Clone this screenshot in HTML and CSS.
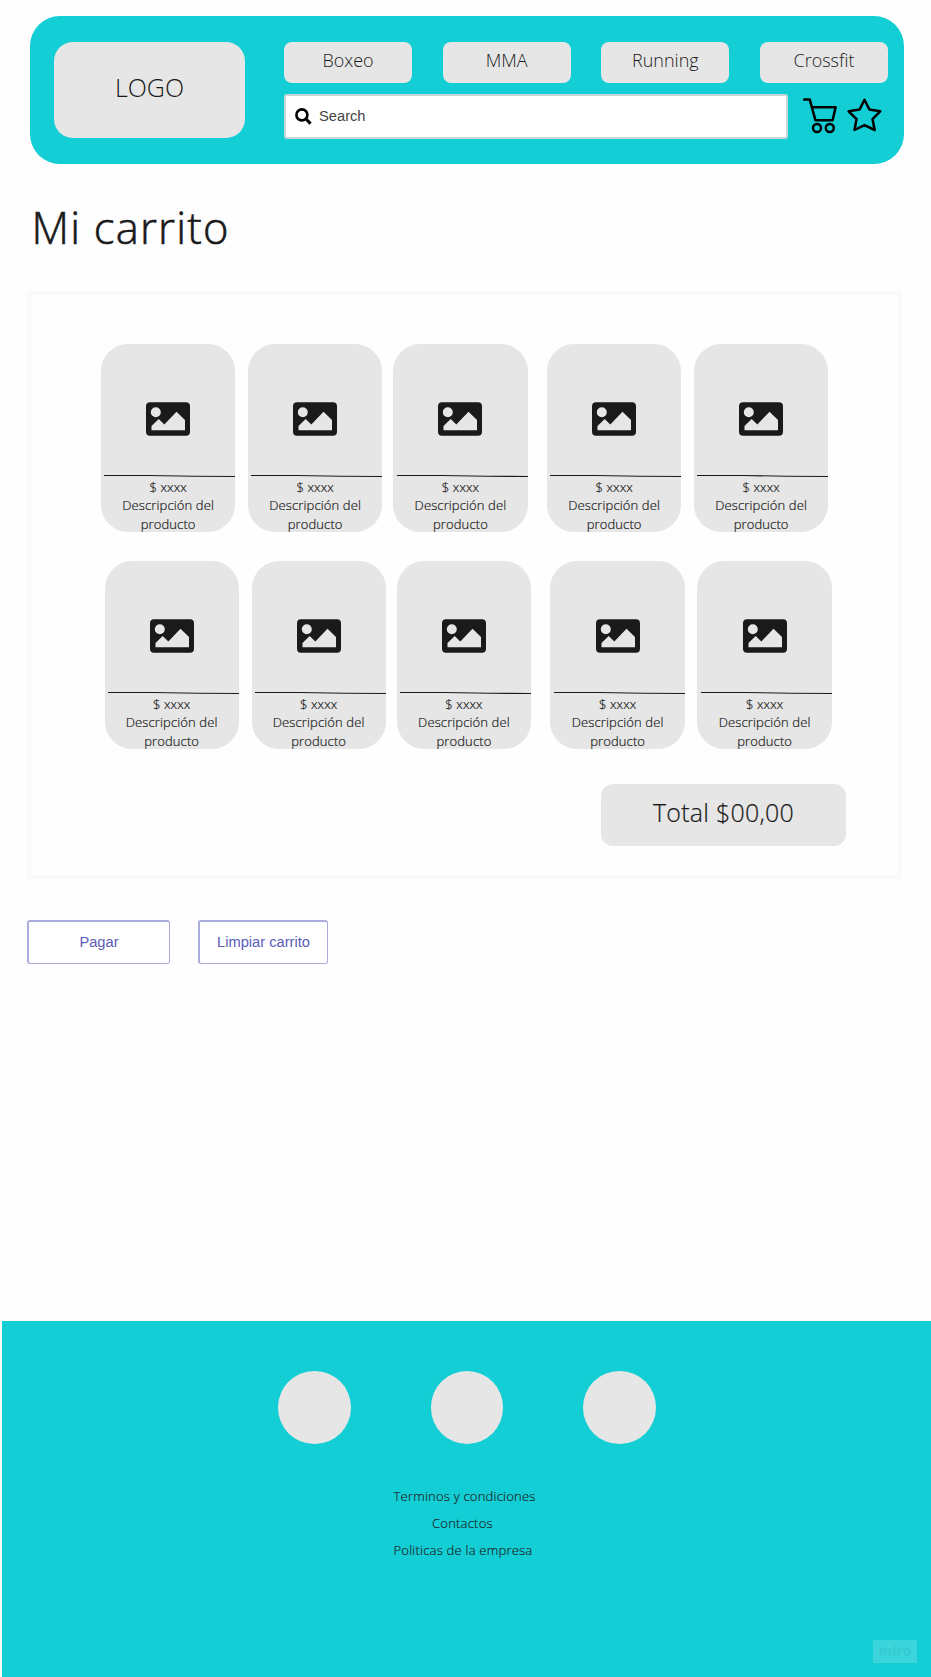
FILE: index.html
```html
<!DOCTYPE html>
<html lang="es">
<head>
<meta charset="utf-8">
<title>Mi carrito</title>
<link rel="stylesheet" href="styles.css">
</head>
<body>
<svg width="0" height="0" class="sprite">
  <symbol id="picture" viewBox="0 0 44 34">
    <path fill="#1a1a1a" fill-rule="evenodd" d="M4 .3H40Q44 .3 44 4.3V29.7Q44 33.7 40 33.7H4Q0 33.7 0 29.7V4.3Q0 .3 4 .3ZM9.8 5.2A5 5 0 1 0 9.8 15.2A5 5 0 1 0 9.8 5.2ZM5.5 28.2H39V18L30.5 9.8L18.3 22.5L12.7 17L5.5 24Z"/>
  </symbol>
  <symbol id="rule" viewBox="0 0 131 4">
    <path d="M0 1.5H45L90 2.2L131 2.5" fill="none" stroke="#1a1a1a" stroke-width="1.1"/>
  </symbol>
</svg>
<header class="header">
  <div class="logo">LOGO</div>
  <div class="header-main">
    <nav class="nav">
      <a class="nav-item">Boxeo</a>
      <a class="nav-item">MMA</a>
      <a class="nav-item">Running</a>
      <a class="nav-item">Crossfit</a>
    </nav>
    <div class="tools">
      <div class="search">
        <svg class="search-icon" width="17" height="17" viewBox="0 0 17 17" fill="none" stroke="#000"><circle cx="6.9" cy="6.9" r="5.5" stroke-width="2.6"/><path d="M11 11L15.6 15.6" stroke-width="3.1"/></svg>
        <span>Search</span>
      </div>
      <svg class="cart" width="35" height="36" viewBox="0 0 35 36" fill="none" stroke="#000" stroke-width="2.5" stroke-linejoin="round" stroke-linecap="round"><path d="M1.2 1.6H6.8L12.4 22.2H29.6L32.6 9.2H9.2"/><circle cx="14" cy="30" r="4"/><circle cx="26.8" cy="30" r="4"/></svg>
      <svg class="star" width="35" height="34" viewBox="0 0 35 34" fill="none" stroke="#000" stroke-width="2.5" stroke-linejoin="round"><path d="M17.5 1.8L22.4 11.5L33.2 13.3L25.5 21.1L27.7 32L17.5 27.1L7.5 32L9.6 21.1L1.6 13.3L12.6 11.5Z"/></svg>
    </div>
  </div>
</header>
<main class="main">
  <h1 class="title">Mi carrito</h1>
  <section class="panel">
    <div class="row">
      <article class="card"><svg class="picture"><use href="#picture"/></svg><svg class="rule"><use href="#rule"/></svg><p>$ xxxx</p><p>Descripción del</p><p>producto</p></article>
      <article class="card"><svg class="picture"><use href="#picture"/></svg><svg class="rule"><use href="#rule"/></svg><p>$ xxxx</p><p>Descripción del</p><p>producto</p></article>
      <article class="card"><svg class="picture"><use href="#picture"/></svg><svg class="rule"><use href="#rule"/></svg><p>$ xxxx</p><p>Descripción del</p><p>producto</p></article>
      <article class="card"><svg class="picture"><use href="#picture"/></svg><svg class="rule"><use href="#rule"/></svg><p>$ xxxx</p><p>Descripción del</p><p>producto</p></article>
      <article class="card"><svg class="picture"><use href="#picture"/></svg><svg class="rule"><use href="#rule"/></svg><p>$ xxxx</p><p>Descripción del</p><p>producto</p></article>
    </div>
    <div class="row row-second">
      <article class="card"><svg class="picture"><use href="#picture"/></svg><svg class="rule"><use href="#rule"/></svg><p>$ xxxx</p><p>Descripción del</p><p>producto</p></article>
      <article class="card"><svg class="picture"><use href="#picture"/></svg><svg class="rule"><use href="#rule"/></svg><p>$ xxxx</p><p>Descripción del</p><p>producto</p></article>
      <article class="card"><svg class="picture"><use href="#picture"/></svg><svg class="rule"><use href="#rule"/></svg><p>$ xxxx</p><p>Descripción del</p><p>producto</p></article>
      <article class="card"><svg class="picture"><use href="#picture"/></svg><svg class="rule"><use href="#rule"/></svg><p>$ xxxx</p><p>Descripción del</p><p>producto</p></article>
      <article class="card"><svg class="picture"><use href="#picture"/></svg><svg class="rule"><use href="#rule"/></svg><p>$ xxxx</p><p>Descripción del</p><p>producto</p></article>
    </div>
    <div class="total">Total $00,00</div>
  </section>
  <div class="actions">
    <button class="btn btn-pay">Pagar</button>
    <button class="btn btn-clear">Limpiar carrito</button>
  </div>
</main>
<footer class="footer">
  <div class="circles"><span class="circle"></span><span class="circle"></span><span class="circle"></span></div>
  <div class="links">
    <a>Terminos y condiciones</a>
    <a class="link-contact">Contactos</a>
    <a>Politicas de la empresa</a>
  </div>
  <div class="badge">miro</div>
</footer>
</body>
</html>
```
FILE: styles.css
```css
* { box-sizing: border-box; }
body {
  margin: 0;
  width: 931px;
  height: 1677px;
  overflow: hidden;
  display: flex;
  flex-direction: column;
  background: #fefefe;
  color: #1a1a1a;
  font-family: "Open Sans", sans-serif;
  font-weight: 300;
}
.sprite { position: absolute; }
p, h1 { margin: 0; font-weight: inherit; }

.header {
  display: flex;
  gap: 39px;
  margin: 16px 27px 0 29.5px;
  padding: 26px 16px 0 24.5px;
  height: 148px;
  flex: none;
  border-radius: 30px;
  background: #14ced6;
}
.logo {
  width: 191px;
  height: 96px;
  border-radius: 19px;
  background: #e6e6e6;
  font-size: 25px;
  line-height: 91px;
  text-align: center;
}
.header-main { width: 604px; }
.nav { display: flex; justify-content: space-between; }
.nav-item {
  width: 128px;
  height: 41.3px;
  border-radius: 8px;
  background: #e6e6e6;
  font-size: 18px;
  line-height: 36px;
  text-align: center;
}
.tools { display: flex; margin-top: 10.7px; }
.search {
  display: flex;
  align-items: center;
  width: 504px;
  height: 45px;
  padding-left: 9px;
  border: 2px solid #c9d6d8;
  border-radius: 3px;
  background: #fff;
  color: #444;
  font: 400 14.7px "Liberation Sans", Arial, sans-serif;
}
.search span { margin-left: 7px; line-height: 17px; }
.cart { margin: 4px 0 0 15px; }
.star { margin: 4px 0 0 9px; }

.main { flex: none; height: 1157px; }
.title {
  margin: 34px 0 0 31.5px;
  height: 60px;
  font-size: 43.5px;
  line-height: 60px;
  letter-spacing: 1.2px;
  -webkit-text-stroke: 0.6px #1a1a1a;
}
.panel {
  margin: 33px 0 0 27px;
  width: 875px;
  height: 588px;
  padding: 49px 0 0 70px;
  border: 4px solid #fafafa;
}
.row {
  display: grid;
  grid-template-columns: 147px 145.3px 153.7px 147px 134px;
}
.row-second { margin: 29px 0 0 3.5px; }
.card {
  width: 134.3px;
  height: 188.2px;
  padding-top: 58px;
  border-radius: 27px;
  background: #e6e6e6;
  font-size: 13px;
  line-height: 18px;
  letter-spacing: 0.12px;
  -webkit-text-stroke: 0.2px #1a1a1a;
  text-align: center;
}
.picture { display: block; width: 44px; height: 34px; margin: 0 auto; }
.rule { display: block; width: 131px; height: 4px; margin: 38px 0 0 3.3px; }
.card p:nth-of-type(1) { margin-top: .1px; }
.card p:nth-of-type(3) { margin-top: .9px; }
.total {
  width: 245px;
  height: 62.5px;
  margin: 34.6px 0 0 500px;
  border-radius: 12px;
  background: #e6e6e6;
  font-size: 25px;
  line-height: 57px;
  letter-spacing: 0.25px;
  -webkit-text-stroke: 0.2px #1a1a1a;
  text-align: center;
}
.actions { display: flex; gap: 28px; margin: 41px 0 0 27px; }
.btn {
  height: 44px;
  padding: 0 0 2px;
  border: 2px solid #adaddd;
  border-width: 2px 1px 1px 2px;
  border-radius: 3px;
  background: #fff;
  color: #5b5bb8;
  font: 400 14.7px "Liberation Sans", Arial, sans-serif;
}
.btn-pay { width: 143px; }
.btn-clear { width: 130px; }

.footer {
  position: relative;
  flex: 1;
  margin-left: 2px;
  padding-top: 50px;
  background: #14ced6;
}
.circles { display: flex; gap: 80px; margin-left: 276px; }
.circle { width: 72.5px; height: 72.5px; border-radius: 50%; background: #e6e6e6; }
.links {
  display: flex;
  flex-direction: column;
  align-items: flex-start;
  margin: 39px 0 0 391.5px;
  font-size: 13px;
  line-height: 27px;
  letter-spacing: 0.22px;
  -webkit-text-stroke: 0.15px #1a1a1a;
}
.link-contact { margin-left: 38.5px; }
.badge {
  position: absolute;
  right: 14px;
  bottom: 14px;
  width: 44px;
  height: 23px;
  background: #3bd5db;
  color: #36cad2;
  font-size: 14px;
  font-weight: 700;
  line-height: 22px;
  text-align: center;
}
```
